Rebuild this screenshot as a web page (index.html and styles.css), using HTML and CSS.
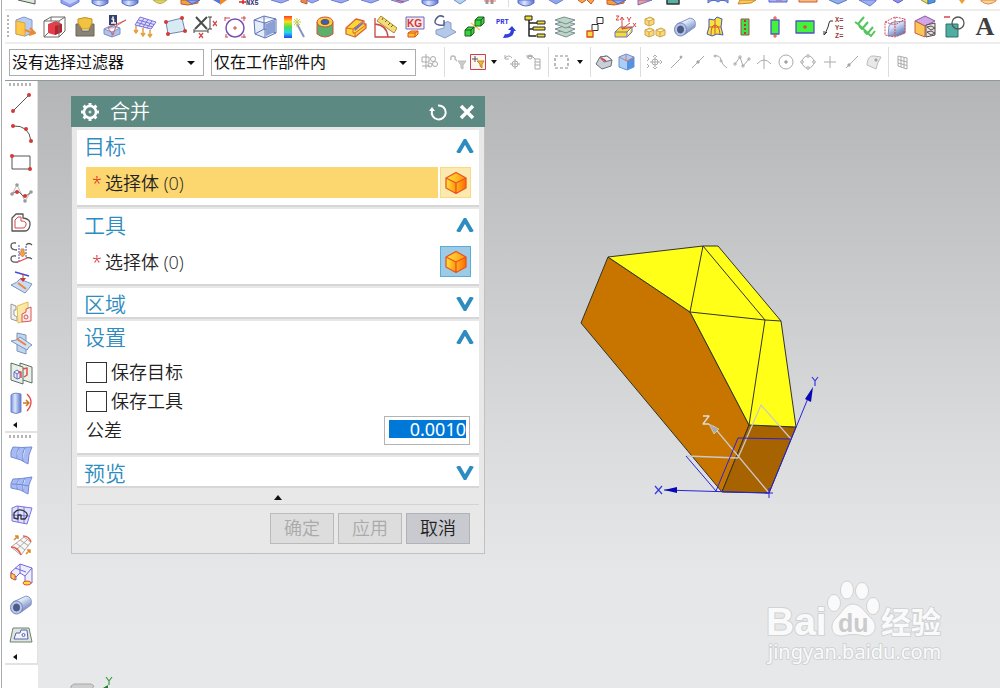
FILE: index.html
```html
<!DOCTYPE html>
<html lang="zh-CN">
<head>
<meta charset="utf-8">
<meta name="viewport" content="width=device-width, initial-scale=1">
<title>合并</title>
<link rel="stylesheet" href="styles.css">
</head>
<body>
<svg class="defs" aria-hidden="true">
  <defs>
    <linearGradient id="blue" x1="0" x2="1"><stop offset="0" stop-color="#6f8fe0"/><stop offset=".4" stop-color="#dbe6fb"/><stop offset="1" stop-color="#5b73c8"/></linearGradient>
    <linearGradient id="tube" x1="0" y1="0" x2=".6" y2="1"><stop offset="0" stop-color="#8fa9e2"/><stop offset=".35" stop-color="#e4edfc"/><stop offset="1" stop-color="#6179b8"/></linearGradient>
    <linearGradient id="amber" x1="0" x2="1"><stop offset="0" stop-color="#ffe63a"/><stop offset="1" stop-color="#ff9410"/></linearGradient>
    <linearGradient id="amberDark" x1="0" x2="1"><stop offset="0" stop-color="#ffb51a"/><stop offset="1" stop-color="#ff6a00"/></linearGradient>
    <linearGradient id="rainbow" x1="0" y1="0" x2="0" y2="1"><stop offset="0" stop-color="#ff3c1e"/><stop offset=".25" stop-color="#ffd91e"/><stop offset=".5" stop-color="#4be04b"/><stop offset=".75" stop-color="#25d5f0"/><stop offset="1" stop-color="#2447f0"/></linearGradient>
    <symbol id="cube" viewBox="0 0 24 24"><path stroke="none" fill="url(#amber)" d="M12 1.500 22 7 12 12 2 7Z"/><path stroke="none" fill="url(#amber)" d="M2 7 12 12V22.500L2 17Z"/><path stroke="none" fill="url(#amberDark)" d="M22 7 12 12V22.500L22 17Z"/><path stroke="#ea5320" stroke-width="1.300" fill="none" d="M12 1.500 22 7V17L12 22.500 2 17V7ZM2 7 12 12 22 7M12 12V22"/></symbol>
    <symbol id="tip-box" viewBox="0 0 24 10"><path fill="#8fa2ee" stroke="#6d7cd6" d="M3 0V3L12 7 21 2V0Z"/><path stroke="none" fill="#c3cefa" d="M4 0H20L12 4Z"/></symbol>
    <symbol id="tip-can" viewBox="0 0 24 10"><path fill="url(#blue)" stroke="#5b6fd0" d="M4 0V3Q12 9 20 3V0Z"/></symbol>
    <symbol id="tip-mix" viewBox="0 0 24 10"><path fill="#f3a23b" stroke="#c65a2d" d="M3 0V4L10 5 20 3V0Z"/><path fill="#8ba3ef" stroke="#5164c4" d="M8 0 14 4 22 0Z"/></symbol>
    <symbol id="pipe" viewBox="0 0 24 24"><path fill="url(#tube)" stroke="#8798c8" d="M4 9 17 3Q24 4 22 12L11 20Z"/><ellipse cx="7.500" cy="14.500" rx="6" ry="6.500" fill="#b4c6ea" stroke="#7588b8"/><ellipse cx="7.500" cy="14.500" rx="3" ry="3.500" fill="#505a86" stroke="#4a5580"/></symbol>
    <symbol id="node" viewBox="0 0 4 4"><circle cx="2" cy="2" r="2" stroke="none" fill="#d23a34"/></symbol>
  </defs>
</svg>

<div class="app">
<header class="bars">
  <div class="bar bar-clipped" role="toolbar" aria-label="特征">
    <button class="tool first" aria-label="基准平面"><svg viewBox="0 0 24 10"><path fill="#dcebd8" stroke="#555" d="M2 0 19 4V0"/></svg></button>
    <button class="tool" aria-label="块"><svg viewBox="0 0 24 10"><use href="#tip-box"/></svg></button>
    <button class="tool" aria-label="圆柱"><svg viewBox="0 0 24 10"><use href="#tip-can"/></svg></button>
    <button class="tool" aria-label="圆锥"><svg viewBox="0 0 24 10"><use href="#tip-can"/></svg></button>
    <button class="tool" aria-label="球"><svg viewBox="0 0 24 10"><path fill="#dcd36a" stroke="#b9ae48" d="M5 0Q12 7 19 0Z"/></svg></button>
    <button class="tool" aria-label="垫块"><svg viewBox="0 0 24 10"><use href="#tip-mix"/></svg></button>
    <button class="tool" aria-label="镜像"><svg viewBox="0 0 24 10"><path stroke="none" fill="#5875d8" d="M5 0 12 4V0Z"/><path stroke="none" fill="#f08a28" d="M12 0V5L19 0Z"/></svg></button>
    <button class="tool" aria-label="NX5"><svg viewBox="0 0 24 10"><path stroke="#e02020" stroke-width="1.500" d="M1 2H8M5 0V4"/><text class="mini navy" x="8" y="5">NX5</text></svg></button>
    <button class="tool" aria-label="壳"><svg viewBox="0 0 24 10"><path fill="#9aa8ee" stroke="#6d7cd6" d="M3 0 13 3 21 0"/></svg></button>
    <button class="tool" aria-label="拔模"><svg viewBox="0 0 24 10"><path fill="#e88a4a" stroke="#d0562a" d="M3 0V2L9 4V0"/><path fill="#9aa8ee" stroke="#6d7cd6" d="M8 0 14 3 21 0"/></svg></button>
    <button class="tool" aria-label="倒圆"><svg viewBox="0 0 24 10"><path fill="#9aa8ee" stroke="#6d7cd6" d="M3 0 13 3 21 0"/></svg></button>
    <button class="tool" aria-label="倒角"><svg viewBox="0 0 24 10"><path fill="#9aa8ee" stroke="#6d7cd6" d="M3 0 13 3 21 0"/></svg></button>
    <button class="tool" aria-label="修剪"><svg viewBox="0 0 24 10"><path fill="#9aa8ee" stroke="#6d7cd6" d="M3 0 13 3 21 0"/><path stroke="#d44" d="M8 0 16 2"/></svg></button>
    <button class="tool" aria-label="凸台"><svg viewBox="0 0 24 10"><use href="#tip-can"/></svg></button>
    <button class="tool" aria-label="变换"><svg viewBox="0 0 24 10"><path fill="#b5d3ef" stroke="#6a91c8" d="M6 0 12 4 18 0"/></svg></button>
    <button class="tool" aria-label="螺纹"><svg viewBox="0 0 24 10"><path stroke="#999" stroke-width="3" d="M9 0V4M14 0V4"/><path stroke="#d77" d="M6 1H18"/></svg></button>
    <span class="sep"></span>
    <button class="tool" aria-label="合并体"><svg viewBox="0 0 24 10"><use href="#tip-can"/></svg></button>
    <button class="tool" aria-label="求差"><svg viewBox="0 0 24 10"><path fill="#8fa8ea" stroke="#6d7cd6" d="M5 0 12 4 19 0"/></svg></button>
    <button class="tool" aria-label="求交"><svg viewBox="0 0 24 10"><path fill="#f4a64a" stroke="#d0562a" d="M4 0 8 3 12 0M13 0 17 4 20 0"/></svg></button>
    <button class="tool" aria-label="缝合"><svg viewBox="0 0 24 10"><use href="#tip-mix"/></svg></button>
    <button class="tool" aria-label="补片"><svg viewBox="0 0 24 10"><path fill="#f0a08a" stroke="#7a6ad0" d="M4 0V5L18 0Z"/></svg></button>
    <button class="tool" aria-label="分割"><svg viewBox="0 0 24 10"><path fill="#58b0a2" stroke="#333" stroke-width="1.500" d="M3-2H15V4H3Z"/></svg></button>
    <button class="tool after-gap" aria-label="偏置"><svg viewBox="0 0 24 10"><path fill="#aebcf6" stroke="#4a66c8" d="M2 3Q7-2 12 2 17-2 22 3V0H2Z"/></svg></button>
    <button class="tool" aria-label="加厚"><svg viewBox="0 0 24 10"><path fill="#f8c861" stroke="#c98c22" d="M4 0 2 4 15 3 20 0Z"/></svg></button>
    <button class="tool" aria-label="阵列"><svg viewBox="0 0 24 10"><path fill="#a6b4f4" stroke="#5165d0" d="M3 0V2H21V0"/><path stroke="#d55" d="M10 0H16"/></svg></button>
    <button class="tool" aria-label="阵列面"><svg viewBox="0 0 24 10"><path fill="#f3bd7a" stroke="#d4573a" d="M3 0V2H21V0"/></svg></button>
    <button class="tool" aria-label="移动面"><svg viewBox="0 0 24 10"><path fill="#8fb0ea" stroke="#5f77c0" d="M3 0 12 4 21 0"/></svg></button>
    <button class="tool" aria-label="删除面"><svg viewBox="0 0 24 10"><path fill="#9cb0f3" stroke="#6c7bd0" d="M3 0 14 6 20 1V0Z"/></svg></button>
    <button class="tool" aria-label="复制面"><svg viewBox="0 0 24 10"><path fill="#8c92ee" stroke="#5b60d0" d="M7 0 12 3 17 0"/></svg></button>
    <button class="tool" aria-label="替换面"><svg viewBox="0 0 24 10"><path fill="#e9dc58" stroke="#a09028" d="M5 0 12 4V0"/><path fill="#4f95e2" stroke="#3971b8" d="M12 0V4L19 2V0"/></svg></button>
    <button class="tool" aria-label="拉出面"><svg viewBox="0 0 24 10"><path stroke="none" fill="#f0a030" d="M13 0 16 4 19 0Z"/></svg></button>
    <button class="tool" aria-label="抽取"><svg viewBox="0 0 24 10"><path fill="#f7d291" stroke="#df8a52" d="M5 1Q12 7 20 1V0H5Z"/></svg></button>
  </div>

  <div class="bar bar-main" role="toolbar" aria-label="工具">
    <span class="grip"></span>
    <button class="tool" aria-label="移动"><svg viewBox="0 0 24 24"><path fill="#b8cdf2" stroke="#8797c4" d="M3 5 11 2 19 5V18L12 21 3 19Z"/><path fill="#ffc84a" stroke="#e0a53c" d="M3 6 12 8V21L3 19Z"/><path stroke="#ea8a2c" stroke-width="2" d="M12 15 20 18M17 13 22 18 16 20"/></svg></button>
    <button class="tool" aria-label="包容体"><svg viewBox="0 0 24 24"><path stroke="none" fill="#e0404c" d="M5 9 13 6 19 9V17L12 20 5 18Z"/><path stroke="none" fill="#b8202c" d="M12 11 19 9V17L12 20Z"/><path stroke="#6a6a6a" d="M1 6 8 2H22V16L16 22H1ZM1 6H16V22M16 6 22 2M8 2V6M1 22 5 18"/></svg></button>
    <button class="tool" aria-label="型腔"><svg viewBox="0 0 24 24"><path fill="#8a8375" stroke="#6b6558" d="M3 9H7L9 16H16L18 9H21V21H3Z"/><path fill="#f0c440" stroke="#c59022" d="M5 4Q12 1 19 4V8L16 14H9L5 8Z"/></svg></button>
    <button class="tool" aria-label="信息"><svg viewBox="0 0 24 24"><path fill="#adc2ef" stroke="#7d90c4" d="M1 14 9 10 17 13V19L9 22 1 19ZM1 14 9 17 17 13M9 17V22"/><path stroke="none" fill="#34406c" d="M6 0H14V10H6Z"/><path stroke="#fff" stroke-width="1.500" d="M8.500 4H10.500V8M8 8H13M10 1.500V3"/><path stroke="#d86060" d="M5 13 10 20 13 11 23 5 5 13"/></svg></button>
    <button class="tool" aria-label="网格面"><svg viewBox="0 0 24 24"><path fill="#dcdffc" stroke="#7c70dc" d="M7 2 23 7 18 14 2 10ZM5.500 5 21 9.500M4 7.500 20 12M11 3.500 6 11M15 4.500 10 12M19 6 14 13"/><path stroke="#e4a040" stroke-width="1.500" d="M3 11V17M10 13V20M17 15V21M1 15 3 18 5 15M8 18 10 21 12 18M15 19 17 22 19 19"/></svg></button>
    <button class="tool" aria-label="四点面"><svg viewBox="0 0 24 24"><path fill="#d9ebf2" stroke="#6c86ba" d="M3 7 19 3 22 16 5 19Z"/><use href="#node" x="1" y="5" width="4" height="4"/><use href="#node" x="17" y="1" width="4" height="4"/><use href="#node" x="20" y="14" width="4" height="4"/><use href="#node" x="3" y="17" width="4" height="4"/></svg></button>
    <button class="tool" aria-label="删除尺寸"><svg viewBox="0 0 24 24"><path stroke="#4b4f4b" stroke-width="2" d="M3 2 14 14M14 2 2 14"/><path stroke="#444" d="M1 16H15M1 14V18M15 14V18M17 2V14M15 2H19M15 14H19"/><path stroke="#d54848" stroke-width="1.300" d="M20 6 24 11M24 6 20 11M6 18 10 23M10 18 6 23"/></svg></button>
    <button class="tool" aria-label="圆"><svg viewBox="0 0 24 24"><circle cx="12" cy="13" r="9" stroke="#7950b4" stroke-width="1.500"/><path stroke="#d64545" d="M2 2V6M2 3H7M21 1V6M18 3H23M12 11V15M10 13H14M2 22H5M3 19V22M18 22H23M21 19V23"/></svg></button>
    <button class="tool" aria-label="线框块"><svg viewBox="0 0 24 24"><path fill="#e4ebfb" stroke="#6176b5" d="M1 5 11 1 23 4V18L12 23 2 19ZM1 5 12 8 23 4M12 8V23M2 19 11 14 23 18M11 14V1"/><path stroke="none" fill="#8ba1d5" d="M13 9 22 5V17L13 21Z"/></svg></button>
    <button class="tool" aria-label="颜色"><svg viewBox="0 0 24 24"><path stroke="none" fill="url(#rainbow)" d="M1 1H9V23H1Z"/><path stroke="#8a93c0" stroke-width="2" d="M14 9 21 22"/><path stroke="#c5d04e" d="M14 3V12M10 7H18M11 4 17 10M17 4 11 10"/></svg></button>
    <button class="tool" aria-label="圆筒"><svg viewBox="0 0 24 24"><path fill="#5bb06c" stroke="#d4513b" d="M4 7V19Q12 25 20 19V7"/><ellipse cx="12" cy="7" rx="8" ry="5" fill="#f7cf3c" stroke="#d4513b"/><ellipse cx="12" cy="7" rx="4" ry="2.500" fill="#4a57b8" stroke="#555"/></svg></button>
    <button class="tool" aria-label="台阶块"><svg viewBox="0 0 24 24"><path fill="#f9da35" stroke="#e06038" stroke-width="1.300" d="M3 13 13 4 21 6V9H23V13L12 22 3 19Z"/><path stroke="#e06038" d="M3 13 10 14 20 6M10 14V18L12 18 23 10M12 18V22"/><path stroke="none" fill="#7a72c0" d="M11 13 20 7V9L12 16Z"/></svg></button>
    <button class="tool" aria-label="测角"><svg viewBox="0 0 24 24"><path stroke="#c94747" stroke-width="1.300" d="M2 3V22H22M2 9Q14 10 15 22"/><path fill="#f4dc76" stroke="#ae8a38" d="M8 1 24 13 21 18 4 6Z"/><path stroke="#856217" d="M9 5 10 3M12 7 14 5M15 10 17 8M18 12 20 10"/></svg></button>
    <button class="tool" aria-label="质量"><svg viewBox="0 0 24 24"><path fill="#fbe6e6" stroke="#6a6ac4" d="M3 2H21V14H3Z"/><text class="kg" x="4" y="12">KG</text><path fill="#ffc323" stroke="#dc5324" d="M5 18 8 16H15V19L12 22H5ZM5 18H12V22M12 18 15 16"/></svg></button>
    <button class="tool" aria-label="旋转体"><svg viewBox="0 0 24 24"><path fill="#b4c8ea" stroke="#8a9cc4" d="M3 15 11 13V8Q15 5 18 8V14L23 17 12 23 3 19Z"/><path stroke="#56638f" stroke-width="1.500" d="M11 2Q6-1 3 4T6 10 11 9V5"/></svg></button>
    <button class="tool" aria-label="连接体"><svg viewBox="0 0 24 24"><path stroke="#f0d050" stroke-width="1.500" d="M8 8 17 15M9 15 16 8"/><path fill="#35d53d" stroke="#245724" d="M2 15 5 12H11V18L8 21H2ZM2 15H8V21M8 15 11 12M12 5 15 2H21V8L18 11H12ZM12 5H18V11M18 5 21 2"/></svg></button>
    <button class="tool" aria-label="PRT"><svg viewBox="0 0 24 24"><text class="mini blue" x="3" y="9">PRT</text><path stroke="none" fill="#3041de" d="M10 23 12 19Q17 20 18 15H15L19 11 23 16H21Q21 23 10 23Z"/></svg></button>
    <button class="tool" aria-label="结构树"><svg viewBox="0 0 24 24"><path stroke="#252525" stroke-width="1.500" d="M6 3V21H13M6 8H14M6 14H10"/><path fill="#ebdd34" stroke="#252525" d="M2 1H9V5H2ZM14 6H22V9H14ZM10 12H22V15H10ZM14 19H22V22H14Z"/></svg></button>
    <button class="tool" aria-label="图层"><svg viewBox="0 0 24 24"><g fill="#bcd8c4" stroke="#7c8c98"><path d="M2 18 11 15 22 18 13 22Z"/><path d="M2 14 11 11 22 14 13 18Z"/><path d="M2 9 11 6 22 9 13 13Z"/><path d="M2 5 11 2 22 5 13 9Z"/></g></svg></button>
    <button class="tool" aria-label="装配"><svg viewBox="0 0 24 24"><path fill="#fff" stroke="#333" d="M14 2.500H20V8.500H14ZM9 9.500H15V15.500H9Z"/><path fill="#fbda38" stroke="#d8472a" stroke-width="1.300" d="M4 16H10V22H4Z"/></svg></button>
    <button class="tool" aria-label="坐标"><svg viewBox="0 0 24 24"><path fill="#f9da35" stroke="#6d75bb" d="M2 17 7 12H19L14 17V22H2ZM2 17H14M14 22 19 17V12"/><path stroke="#d94545" d="M9 14V3M7 5 9 2 11 5M9 14 17 8M9 14 20 12M3 1H6L3 5H6M14 2 16 5 18 2M16 5V7M20 8 23 12M23 8 20 12"/></svg></button>
    <button class="tool" aria-label="组件"><svg viewBox="0 0 24 24"><g fill="#f9d878" stroke="#d0a548"><path id="crate" d="M2 4 7 2 11 4V9L6 11 2 9ZM2 4 6 6 11 4M6 6V11"/><use href="#crate" y="11"/><use href="#crate" x="11" y="11"/></g></svg></button>
    <button class="tool" aria-label="管"><svg viewBox="0 0 24 24"><use href="#pipe"/></svg></button>
    <button class="tool" aria-label="展开"><svg viewBox="0 0 24 24"><path fill="#f4e43d" stroke="#4357bf" d="M6 4 11 5 14 2 19 4 18 12 20 20 14 19 9 21 4 19 6 12Z"/><path stroke="#d35434" d="M12 4V20M6 12H18M8 20Q8 10 12 10T17 19"/></svg></button>
    <button class="tool" aria-label="竖条"><svg viewBox="0 0 24 24"><path fill="#3ce246" stroke="#a34b4b" d="M8 4H16V20H8Z"/><path stroke="#b53a3a" stroke-width="2" stroke-dasharray="2 2" d="M12 5V20"/></svg></button>
    <button class="tool" aria-label="竖矩形"><svg viewBox="0 0 24 24"><path fill="#3ff33f" stroke="#5451bd" stroke-width="1.300" d="M8 5H16V19H8Z"/><path stroke="#e04b35" d="M12 1V5M10 3H14M12 19V23M10 21H14"/></svg></button>
    <button class="tool" aria-label="横矩形"><svg viewBox="0 0 24 24"><path fill="#3ff33f" stroke="#5451bd" stroke-width="1.300" d="M3 6H21V18H3Z"/><path stroke="#e04b35" stroke-width="1.300" d="M12 10V14M10 12H14"/></svg></button>
    <button class="tool" aria-label="坐标标注"><svg viewBox="0 0 24 24"><path stroke="#333" d="M10 6H7Q6 7 5 12L2 19M1 16V20L4 17"/><text class="mini wine" x="12" y="7">X=</text><text class="mini wine" x="12" y="15">Y=</text><text class="mini wine" x="12" y="23">Z=</text></svg></button>
    <button class="tool" aria-label="检查"><svg viewBox="0 0 24 24"><path stroke="#52c55c" stroke-width="2" d="M2 7 5 9 11 2M6 11 9 14 15 7M11 16 14 19 20 12M5 9 18 21 22 16"/></svg></button>
    <button class="tool" aria-label="抽取体"><svg viewBox="0 0 24 24"><path fill="url(#tube)" stroke="#8090d4" d="M6 11Q8 6 12 7L22 6V18L14 21H5Z"/><path stroke="#d65050" stroke-dasharray="2 1" d="M2 7 12 2 22 4V18L12 22 2 20ZM2 7 12 10 22 4M12 2V21"/></svg></button>
    <button class="tool" aria-label="体属性"><svg viewBox="0 0 24 24"><path fill="#d3a6e7" stroke="#825aa0" d="M2 6 12 1 22 6 12 11Z"/><path fill="#fac654" stroke="#ce5b3e" d="M2 6 12 11V22L2 18Z"/><path fill="#e7e2e2" stroke="#544a4a" d="M13 10 22 8V20L13 22ZM14 12 18 11 22 13 18 15ZM14 17 18 16 22 18 18 20Z"/></svg></button>
    <button class="tool" aria-label="布尔"><svg viewBox="0 0 24 24"><path fill="#4eaea1" stroke="#356f68" d="M3 9H15V22H3Z"/><circle cx="15" cy="8" r="6" stroke="#555" stroke-width="1.300"/><path stroke="#d84444" stroke-width="1.500" d="M1 2H7"/></svg></button>
    <button class="tool letter" aria-label="文本">A</button>
  </div>

  <div class="bar bar-select" role="toolbar" aria-label="选择">
    <span class="pick pick-filter"><select aria-label="类型过滤器"><option>没有选择过滤器</option></select></span>
    <span class="pick pick-scope"><select aria-label="选择范围"><option>仅在工作部件内</option></select></span>
    <button class="mini-tool" aria-label="重置"><svg viewBox="0 0 20 20"><path d="M6 2V17M2 5H9V10H2ZM2 14H10"/><circle cx="13" cy="7" r="2.500"/><circle cx="15" cy="12" r="2.500"/><circle cx="10" cy="13" r="2"/></svg></button>
    <span class="sep"></span>
    <button class="mini-tool" aria-label="筛选"><svg viewBox="0 0 20 20"><path stroke="#bbb" stroke-width="1.500" d="M3 8Q2 4 5 4T7 7L9 9"/><path fill="#ccc" stroke="#bbb" d="M10 9H18L15 13V17L13 16V13Z"/></svg></button>
    <button class="mini-tool narrow" aria-label="细节筛选"><svg viewBox="0 0 16 16"><path stroke="#c9414d" fill="#fff6f2" d="M.500 .500H15.500V15.500H.500Z"/><path stroke="#555" d="M5 2V8M2 5H8"/><path fill="#f0b93a" stroke="#be8721" d="M7 7H14L12 10V14L10 12V10Z"/></svg></button>
    <button class="caret" aria-label="更多筛选"></button>
    <button class="mini-tool" aria-label="上一个"><svg viewBox="0 0 20 20"><path d="M3 3V7H7M3 6Q7 2 10 6"/><circle cx="13" cy="12" r="3"/><path d="M13 7V17M8 12H18"/></svg></button>
    <button class="mini-tool" aria-label="列表"><svg viewBox="0 0 20 20"><path d="M2 4H9M3 6Q7 2 11 7M11 7V17H16V7ZM11 10H16M11 13H16"/><circle cx="6" cy="5" r="2"/></svg></button>
    <span class="sep"></span>
    <button class="mini-tool" aria-label="矩形选择"><svg viewBox="0 0 20 20"><path stroke="#8a8a8a" stroke-dasharray="3 2" stroke-width="1.200" d="M3 4H16V16H3Z"/></svg></button>
    <button class="caret" aria-label="选择方式"></button>
    <span class="sep"></span>
    <button class="mini-tool" aria-label="着色"><svg viewBox="0 0 20 20"><path fill="#c9ced9" stroke="#6c707a" d="M2 12 6 5 13 4 18 8 17 14 8 17Z"/><path fill="#edf0f5" stroke="#6c707a" d="M6 5 13 4 18 8 10 10Z"/><path stroke="#d84545" stroke-width="1.500" d="M7 6 12 9"/></svg></button>
    <button class="mini-tool" aria-label="视图块"><svg viewBox="0 0 20 20"><path fill="#a9cff6" stroke="#6495d5" d="M3 5 10 2 18 5V15L11 18 3 15Z"/><path stroke="none" fill="#5792df" d="M11 9 18 5V15L11 18Z"/><path stroke="#dc7575" d="M3 5 11 9 18 5M10 2V9"/></svg></button>
    <span class="sep"></span>
    <button class="mini-tool" aria-label="捕捉点"><svg viewBox="0 0 20 20"><circle cx="11" cy="10" r="3"/><path d="M11 5V15M6 10H16M9 5 11 3 13 5M9 15 11 17 13 15M16 8 18 10 16 12M3 5 5 7 3 9M3 12 5 14 3 16"/></svg></button>
    <button class="mini-tool" aria-label="端点"><svg viewBox="0 0 20 20"><path d="M5 16 15 6"/><circle cx="15" cy="5" r="1" fill="#999"/></svg></button>
    <button class="mini-tool" aria-label="中点"><svg viewBox="0 0 20 20"><path d="M4 16 16 4"/><circle cx="10" cy="10" r="1.200" fill="#999"/></svg></button>
    <button class="mini-tool" aria-label="控制点"><svg viewBox="0 0 20 20"><path d="M5 4Q10 3 11 8T17 16"/><circle cx="5" cy="4" r="1"/><circle cx="11" cy="9" r="1"/></svg></button>
    <button class="mini-tool" aria-label="极点"><svg viewBox="0 0 20 20"><path d="M3 12 8 5 11 14 17 7"/><circle cx="3" cy="12" r="1.200"/><circle cx="8" cy="5" r="1.200"/><circle cx="11" cy="14" r="1.200"/><circle cx="17" cy="7" r="1.200"/></svg></button>
    <button class="mini-tool" aria-label="交点"><svg viewBox="0 0 20 20"><path d="M10 3V17M3 12Q10 4 17 12"/></svg></button>
    <button class="mini-tool" aria-label="圆心"><svg viewBox="0 0 20 20"><circle cx="10" cy="10" r="7"/><circle cx="10" cy="10" r="1.300" fill="#999"/></svg></button>
    <button class="mini-tool" aria-label="象限点"><svg viewBox="0 0 20 20"><circle cx="10" cy="10" r="6"/><g fill="#fff"><circle cx="10" cy="4" r="1.300"/><circle cx="16" cy="10" r="1.300"/><circle cx="10" cy="16" r="1.300"/><circle cx="4" cy="10" r="1.300"/></g></svg></button>
    <button class="mini-tool" aria-label="现有点"><svg viewBox="0 0 20 20"><path d="M10 4V16M4 10H16"/></svg></button>
    <button class="mini-tool" aria-label="曲线上的点"><svg viewBox="0 0 20 20"><path d="M4 16 16 4"/><circle cx="7" cy="13" r="1.200" fill="#999"/></svg></button>
    <button class="mini-tool" aria-label="面上的点"><svg viewBox="0 0 20 20"><path fill="#e9e9e9" stroke="#bbb" d="M3 12Q4 3 10 4L17 5Q13 11 12 17L3 13Z"/><circle cx="12" cy="8" r="1.200" fill="#999"/></svg></button>
    <span class="sep"></span>
    <button class="mini-tool" aria-label="网格点"><svg viewBox="0 0 20 20"><path d="M6 4 15 6V17L6 14ZM6 7.500 15 10M6 11 15 13.500M9 5V15M12 5.500V16"/></svg></button>
  </div>
</header>

<main class="workspace">
  <nav class="side">
    <div class="group" role="toolbar" aria-label="曲线">
      <span class="grip-h"></span>
      <button class="tool" aria-label="直线"><svg viewBox="0 0 24 24"><path d="M4 20 20 4"/><use href="#node" x="2" y="18" width="4" height="4"/><use href="#node" x="18" y="2" width="4" height="4"/></svg></button>
      <button class="tool" aria-label="圆弧"><svg viewBox="0 0 24 24"><path d="M4 5Q20 4 22 20"/><use href="#node" x="2" y="3" width="4" height="4"/><use href="#node" x="15" y="6" width="4" height="4"/><use href="#node" x="20" y="18" width="4" height="4"/></svg></button>
      <button class="tool" aria-label="矩形"><svg viewBox="0 0 24 24"><path d="M3 5H21V18H3Z"/><use href="#node" x="1" y="3" width="4" height="4"/><use href="#node" x="19" y="16" width="4" height="4"/></svg></button>
      <button class="tool" aria-label="样条"><svg viewBox="0 0 24 24"><path stroke="#bbb" d="M3 13 8 4 16 20 22 11"/><path stroke="#555" d="M3 13Q9 8 12 13T22 11"/><g fill="#999" stroke="none"><circle cx="3" cy="13" r="1.800"/><circle cx="8" cy="4" r="1.800"/><circle cx="16" cy="20" r="1.800"/><circle cx="22" cy="11" r="1.800"/></g><use href="#node" x="6" y="9" width="4" height="4"/><use href="#node" x="14" y="13" width="4" height="4"/></svg></button>
      <button class="tool" aria-label="偏置曲线"><svg viewBox="0 0 24 24"><path stroke-width="1.300" d="M3 20V7L7 3H14V7Q22 8 21 14T16 20Z"/><path stroke="#e04545" d="M6 17V9L9 6H12V10Q18 10 17 14T13 17Z"/></svg></button>
      <button class="tool" aria-label="桥接"><svg viewBox="0 0 24 24"><path stroke-width="1.300" d="M7 2Q2 1 2 5T8 9M7 15Q2 14 2 18T9 21M17 4Q20 1 23 4M17 17Q20 16 23 18"/><path stroke="#4646df" stroke-dasharray="2 1" d="M10 4V20M17 5V17"/><path stroke="#e44" stroke-width="1.300" d="M9 21 18 17"/><path fill="#f4a638" stroke="#d08a45" d="M12 8H15V12H17L13.500 16 10 12H12Z"/></svg></button>
      <button class="tool" aria-label="投影曲线"><svg viewBox="0 0 24 24"><path fill="#c9dcf1" stroke="#7a94ba" d="M2 14Q8 12 11 8L23 13Q20 18 16 22Z"/><path stroke="#4747db" stroke-width="1.500" d="M6 1 20 5"/><path stroke="#c33" d="M14 3V9"/><path stroke="none" fill="#c33" d="M11 7H17L14 11Z"/><path stroke="#ef8247" stroke-width="2" d="M9 12 17 18"/></svg></button>
      <button class="tool" aria-label="组合投影"><svg viewBox="0 0 24 24"><path fill="#eee" stroke="#999" d="M2 3 7 5V9H5V14L8 16V20L2 18Z"/><path fill="#fbe8a4" stroke="#dfbc58" d="M8 5 19 1V19L9 22Z"/><path fill="#faecea" stroke="#d85555" d="M13 13 17 11V8L22 6V20L13 21Z"/><circle cx="17" cy="16" r="2" stroke="#d85555"/></svg></button>
      <button class="tool" aria-label="相交曲线"><svg viewBox="0 0 24 24"><path fill="#c3d5ec" stroke="#7a94ba" d="M8 2 17 4V23L8 20Z"/><path fill="#cfe1f4" stroke="#7a94ba" d="M2 10Q8 10 11 6L23 14Q20 15 18 19Z"/><path stroke="#ef8247" stroke-width="2" d="M8 8 17 14"/></svg></button>
      <button class="tool" aria-label="截面曲线"><svg viewBox="0 0 24 24"><path fill="#e8f1e8" stroke="#5e6e60" d="M11 2 23 6V22L11 18Z"/><path fill="#e8f1e8" stroke="#5e6e60" d="M2 2 14 6V23L2 19Z"/><path stroke="#6b6bd0" d="M5 11 8 9 11 11V17L8 18 5 16ZM5 11 8 13 11 11M8 13V18"/><path stroke="#e14d4d" stroke-width="1.500" d="M9 11H12V17M14 8 18 7V14L15 16"/></svg></button>
      <button class="tool" aria-label="抽取曲线"><svg viewBox="0 0 24 24"><path fill="url(#blue)" stroke="#7286cc" d="M2 4Q5 1 12 3V21Q7 24 2 21Z"/><path stroke="#d27424" stroke-width="1.500" d="M14 12H19M17 9 20 12 17 15"/><path stroke="#e84747" stroke-width="1.300" d="M18 3Q26 11 18 20"/></svg></button>
      <button class="more" aria-label="更多曲线"></button>
    </div>
    <div class="group" role="toolbar" aria-label="曲面">
      <span class="grip-h"></span>
      <button class="tool" aria-label="直纹"><svg viewBox="0 0 24 24"><path fill="#a6bbf3" stroke="#7488d4" d="M4 4Q12 5 23 4Q19 11 19 21Q12 16 2 14Q1 8 4 4ZM10 5Q7 9 8 15M16 5Q13 9 14 18"/></svg></button>
      <button class="tool" aria-label="通过网格"><svg viewBox="0 0 24 24"><path fill="#a6bbf3" stroke="#7488d4" d="M4 6Q12 6 23 4Q19 11 19 21Q12 16 2 15Q1 10 4 6ZM10 6Q7 9 8 16M16 5Q13 9 14 18M3 11Q12 11 20 13"/></svg></button>
      <button class="tool" aria-label="N边曲面"><svg viewBox="0 0 24 24"><path fill="#dfe2fc" stroke="#7a70e2" d="M3 5 8 3 23 5 18 21 3 18ZM9 3V19M15 4V20M3 12 20 13"/><path stroke="#343434" stroke-width="1.300" d="M5 15V10Q9 5 15 8T16 16H12V12H9V16Z"/></svg></button>
      <button class="tool" aria-label="延伸曲面"><svg viewBox="0 0 24 24"><path fill="#faf6f4" stroke="#aaa" d="M2 14 15 4 22 9 12 22ZM7 10 16 17M11 7 20 13M7 17 19 6"/><path stroke="#e65e4b" stroke-width="1.500" d="M2 14Q9 14 12 22M14 3Q20 3 22 9"/><path stroke="#dc8828" stroke-width="1.500" d="M5 7 9 3M6 3H9V6M17 21 21 17M18 17H21V20"/></svg></button>
      <button class="tool" aria-label="扫掠"><svg viewBox="0 0 24 24"><path fill="#eceefa" stroke="#7568e0" d="M2 9 11 1 23 5V20L16 21V13L11 10 7 14V17L2 15ZM2 9 7 14M11 10V1M16 13 23 5M6 5 17 9"/><path fill="#ffdc3a" stroke="#df4f38" d="M2 10 6 12V17L2 15Z"/><ellipse cx="18" cy="20" rx="4" ry="2" fill="#ffdc3a" stroke="#df4f38"/></svg></button>
      <button class="tool" aria-label="管道"><svg viewBox="0 0 24 24"><use href="#pipe"/></svg></button>
      <button class="tool" aria-label="有界平面"><svg viewBox="0 0 24 24"><path fill="#dce8dc" stroke="#727e75" d="M4 5H20L23 19H1Z"/><path fill="#f1f4ff" stroke="#5863a5" d="M5 16 7 10H11L12 7H18L19 16Z"/><circle cx="14.500" cy="12" r="1.500" stroke="#5863a5"/></svg></button>
      <button class="more" aria-label="更多曲面"></button>
    </div>
  </nav>

  <section class="canvas" aria-label="图形窗口">
    <svg class="model" viewBox="570 235 260 270">
      <g stroke="#33332a" stroke-width="1">
        <path fill="#c87500" d="M608 257 690 312 749 425 722 492 581 323Z"/>
        <path fill="#a66300" d="M749 425 796 427 769 493 722 492Z"/>
        <path fill="#ffff17" d="M608 257 703 246 718 246 781 321 796 427 749 425 690 312Z"/>
        <path d="M703 246 690 312 765 320 781 321M703 246 765 320 749 425"/>
      </g>
      <path stroke="#cdc9c5" stroke-width="1.300" d="M769 493 713 426M738 458 761 405 791 439M738 458 686 456"/>
      <path fill="#aaa" stroke="#eee" stroke-width=".5" d="M709 424 719 429 714 434Z"/>
      <path stroke="#2a22d8" d="M769 493 811 391M769 493 664 490M716 491 738 438 791 439M716 491 686 456M769 488V498M765 493H773"/>
      <path stroke="none" fill="#0808b4" d="M813 387 805 399 811 402ZM664 490 677 487V493Z"/>
      <path stroke="#3938dd" stroke-width="1.200" d="M812 377 815 381 818 377M815 381V386M655 486 662 494M662 486 655 494"/>
      <path stroke="#ddd" stroke-width="1.300" d="M703 416H709L703 424H709"/>
    </svg>

    <svg class="triad" viewBox="66 672 60 16">
      <path fill="#cfcfcf" stroke="#a9a9a9" d="M71 688V686L74 684H91L94 686 91 690"/>
      <path stroke="#3f9b43" stroke-width="1.200" d="M106 677 109 681 112 677M109 681V685"/>
      <path stroke="none" fill="#227a2b" d="M103 688 108 685V688Z"/>
    </svg>

    <svg class="watermark" viewBox="760 575 190 95">
      <g class="ink">
        <text class="wm-brand" x="766" y="635">Bai</text>
        <ellipse cx="834" cy="603" rx="6.500" ry="8.500"/>
        <ellipse cx="847" cy="590" rx="6.500" ry="9"/>
        <ellipse cx="862" cy="591" rx="6.500" ry="8.500"/>
        <ellipse cx="873" cy="606" rx="6.500" ry="8.500"/>
        <path d="M853 604C861 604 865 613 871 618 879 625 875 637 864 636 857 634 849 634 843 636 831 637 829 625 836 618 842 613 845 604 853 604Z"/>
        <text class="wm-cjk" x="881" y="633">经验</text>
        <text class="wm-url" x="768" y="659">jingyan.baidu.com</text>
      </g>
      <text class="wm-du" x="838" y="632">du</text>
    </svg>

    <form class="dialog" aria-labelledby="dialog-title">
      <header class="dialog-head">
        <svg class="gear" viewBox="0 0 20 20"><circle cx="10" cy="10" r="6" stroke-width="2.500"/><path stroke-width="3" d="M10 1V4M10 16V19M1 10H4M16 10H19M3.600 3.600 5.500 5.500M14.500 14.500 16.400 16.400M16.400 3.600 14.500 5.500M5.500 14.500 3.600 16.400"/><circle cx="10" cy="10" r="1" stroke-width="1"/></svg>
        <h1 id="dialog-title">合并</h1>
        <button type="button" class="head-btn" aria-label="重置"><svg viewBox="0 0 20 20"><path stroke-width="2" d="M9 3.500A7 7 0 1 1 3 8.500"/><path fill="#fff" stroke="none" d="M0 9 3 5 6 9Z"/></svg></button>
        <button type="button" class="head-btn" aria-label="关闭"><svg viewBox="0 0 20 20"><path stroke-width="3.500" d="M4 4 16 16M16 4 4 16"/></svg></button>
      </header>

      <section class="panel">
        <button type="button" class="panel-head">目标<svg viewBox="0 0 18 14"><path d="M2 14 9 2 16 14"/></svg></button>
        <div class="pick-row">
          <span class="pick-label active"><span class="star">*</span>选择体 (0)</span>
          <button type="button" class="body-btn warm" aria-label="选择目标体"><svg viewBox="0 0 24 24"><use href="#cube"/></svg></button>
        </div>
      </section>

      <section class="panel">
        <button type="button" class="panel-head">工具<svg viewBox="0 0 18 14"><path d="M2 14 9 2 16 14"/></svg></button>
        <div class="pick-row">
          <span class="pick-label"><span class="star">*</span>选择体 (0)</span>
          <button type="button" class="body-btn cool" aria-label="选择工具体"><svg viewBox="0 0 24 24"><use href="#cube"/></svg></button>
        </div>
      </section>

      <section class="panel">
        <button type="button" class="panel-head">区域<svg viewBox="0 0 18 14"><path d="M2 0 9 12 16 0"/></svg></button>
      </section>

      <section class="panel">
        <button type="button" class="panel-head">设置<svg viewBox="0 0 18 14"><path d="M2 14 9 2 16 14"/></svg></button>
        <div class="options">
          <label class="check"><input type="checkbox">保存目标</label>
          <label class="check"><input type="checkbox">保存工具</label>
          <div class="field"><label for="tolerance">公差</label><span class="num"><input id="tolerance" type="text" value="0.0010"></span></div>
        </div>
      </section>

      <section class="panel">
        <button type="button" class="panel-head">预览<svg viewBox="0 0 18 14"><path d="M2 0 9 12 16 0"/></svg></button>
      </section>

      <button type="button" class="fold" aria-label="折叠"></button>
      <footer class="actions">
        <button type="button" disabled>确定</button>
        <button type="button" disabled>应用</button>
        <button type="button">取消</button>
      </footer>
    </form>
  </section>
</main>
</div>
</body>
</html>
```

FILE: styles.css
```css
* { box-sizing: border-box; }

body {
  margin: 0;
  background: #fff;
  color: #222;
  font-family: "Open Sans", "Noto Sans CJK SC", sans-serif;
  font-size: 18px;
}

button {
  margin: 0;
  padding: 0;
  border: 0;
  background: none;
  color: inherit;
  font: inherit;
}

svg { display: block; fill: none; stroke: #555; stroke-linejoin: round; }
svg text { stroke: none; }
.defs { position: absolute; width: 0; height: 0; }

.app {
  display: flex;
  flex-direction: column;
  min-height: 100vh;
  margin-left: 1px;
  padding-left: 3px;
  border-left: 1px solid #a9acae;
}

/* Toolbars */
.bars { border-bottom: 1px solid #8f9a9c; overflow: hidden; }
.bar { display: flex; align-items: center; }
.bar .tool, .side .tool { display: grid; place-items: center; flex: none; width: 30px; }
.tool svg { width: 24px; height: 24px; }

.bar-clipped {
  height: 11px;
  align-items: flex-start;
  padding-left: 8px;
  border-bottom: 2px solid #ededed;
  overflow: hidden;
}
.bar-clipped .tool svg { height: 10px; }
.bar-clipped .first { margin-right: 12px; }
.bar-clipped .after-gap { margin-left: 12px; }

.bar-main { height: 33px; border-bottom: 2px solid #ededed; }
.grip { width: 2px; height: 24px; margin: 0 1px 0 2px; background: repeating-linear-gradient(#b5b5b5 0 2px, transparent 2px 4px); }
.letter { color: #404040; font: bold 26px/30px "Liberation Serif", serif; }

.bar-select { height: 36px; padding-left: 4px; }
.mini-tool { display: grid; place-items: center; flex: none; width: 22px; height: 24px; }
.mini-tool svg { width: 20px; height: 20px; stroke: #aaa; }
.mini-tool.narrow { width: 18px; }
.mini-tool.narrow svg { width: 16px; height: 16px; }
.sep { flex: none; width: 1px; height: 30px; margin: 0 2px 0 3px; background: #ddd; }
.bar-clipped .sep { height: 7px; }
.caret { flex: none; display: grid; place-items: center; width: 14px; height: 24px; }
.caret::after { content: ""; border: 3px solid transparent; border-top: 4px solid #111; border-bottom: 0; }

.pick { position: relative; flex: none; height: 27px; }
.pick-filter { width: 195px; margin-right: 7px; }
.pick-scope { width: 205px; margin-right: 3px; }
.pick select {
  width: 100%;
  height: 100%;
  padding: 0 20px 0 2px;
  border: 1px solid #adadad;
  border-radius: 0;
  background: #fff;
  color: #111;
  font: 16px/24px "Open Sans", "Noto Sans CJK SC", sans-serif;
  appearance: none;
}
.pick::after {
  content: "";
  position: absolute;
  top: 12px;
  right: 9px;
  border: 4px solid transparent;
  border-top-color: #111;
  border-bottom: 0;
  pointer-events: none;
}

.mini { font: bold 7px "Liberation Mono", monospace; }
.navy { fill: #33306e; }
.blue { fill: #3333e0; }
.wine { fill: #9b3c3c; }
.kg { fill: #cf3535; font: bold 10px "Liberation Sans", sans-serif; }

/* Work area */
.workspace { display: flex; flex: 1; }
.side { flex: none; width: 33px; background: #fff; }
.group { display: flex; flex-direction: column; border-right: 1px solid #e2e2e2; border-bottom: 2px solid #e2e2e2; }
.side .tool { width: 32px; height: 30px; }
.grip-h { height: 3px; margin: 2px 4px; background: repeating-linear-gradient(90deg, #b5b5b5 0 2px, transparent 2px 4px); }
.more { display: grid; place-items: center; width: 20px; height: 13px; }
.more::after { content: ""; border: 3px solid transparent; border-right: 4px solid #111; border-left: 0; }

.canvas {
  position: relative;
  flex: 1;
  min-height: 607px;
  overflow: hidden;
  background: linear-gradient(#b4b5b7, #c6c7c9 28%, #dcdddf 62%, #e6e7e9 82%, #e7e8ea);
}
.model { position: absolute; left: 532px; top: 154px; width: 260px; height: 270px; }
.triad { position: absolute; left: 28px; bottom: 0; width: 60px; height: 16px; }
.watermark { position: absolute; right: 50px; bottom: 18px; width: 190px; height: 95px; }
.ink { fill: #fafafa; stroke: #d0d2d4; stroke-width: 1px; }
.ink text { stroke: #d0d2d4; stroke-width: 2px; paint-order: stroke; }
.wm-brand { font: bold 39px "Liberation Sans", sans-serif; }
.wm-cjk { font: bold 30px "Noto Sans CJK SC", sans-serif; }
.wm-url { font: 20px "Noto Sans", sans-serif; }
.wm-du { fill: #c9cbcd; font: bold 25px "Liberation Sans", sans-serif; }

/* Dialog */
.dialog {
  position: absolute;
  left: 33px;
  top: 15px;
  display: flex;
  flex-direction: column;
  gap: 2px;
  width: 414px;
  padding: 0 5px 9px;
  border: 1px solid #bfc1c2;
  border-top: 0;
  background: #e8e8e8;
  font-weight: 350;
}
.dialog-head {
  display: flex;
  align-items: center;
  gap: 6px;
  height: 31px;
  margin: 0 -6px 1px;
  padding: 0 7px 0 9px;
  background: #5c8981;
  color: #fff;
}
.dialog-head svg { width: 20px; height: 20px; stroke: #fff; }
.dialog-head h1 { flex: 1; margin: 0 0 0 4px; font-size: 20px; font-weight: 350; line-height: 28px; }
.head-btn { padding: 1px; }
.head-btn svg { width: 20px; height: 20px; }

.panel { background: #fff; border-bottom: 2px solid #d6d6d6; }
.panel-head {
  display: flex;
  align-items: center;
  justify-content: space-between;
  width: 100%;
  height: 29px;
  padding: 3px 5px 0 7px;
  color: #2d8cc0;
  font-size: 21px;
  line-height: 26px;
}
.panel-head svg { width: 18px; height: 14px; stroke: #2d8cc0; stroke-width: 4; stroke-linejoin: miter; }

.pick-row { display: flex; gap: 2px; padding: 8px 8px 7px 9px; }
.pick-label { flex: 1; display: flex; align-items: center; height: 31px; padding-left: 6px; line-height: 30px; }
.pick-label.active { background: #fcd66e; }
.star { width: 13px; color: #d91414; }
.body-btn { display: grid; place-items: center; width: 31px; height: 31px; border: 1px solid; }
.body-btn svg { width: 24px; height: 24px; }
.warm { border-color: #fbd982; background: #faeab0; }
.cool { border-color: #58add9; background: #9dcbe6; }

.options { display: flex; flex-direction: column; padding: 8px 9px; }
.check { display: flex; align-items: center; gap: 4px; height: 29px; line-height: 29px; }
.check input { appearance: none; width: 21px; height: 21px; margin: 0; border: 1px solid #333; background: #fff; }
.field { display: flex; align-items: center; justify-content: space-between; height: 29px; line-height: 29px; }
.num { width: 86px; height: 29px; padding: 3px 3px 6px 4px; border: 1px solid #b3b3b3; }
.num input {
  display: block;
  width: 100%;
  height: 18px;
  padding: 0;
  border: 0;
  background: #0078d7;
  color: #fff;
  font: 18px/18px "Noto Sans", sans-serif;
  text-align: right;
}

.fold { display: grid; place-items: center; height: 15px; border-bottom: 1px solid #d4d4d4; }
.fold::after { content: ""; border: 4px solid transparent; border-bottom: 5px solid #111; border-top: 0; }
.actions { display: flex; justify-content: flex-end; gap: 4px; padding: 6px 9px 0; }
.actions button { width: 64px; height: 31px; border: 1px solid #b2b2b4; background: #c9cacf; line-height: 27px; }
.actions button:disabled { border-color: #bababa; background: #dddddd; color: #aaa; }
```
